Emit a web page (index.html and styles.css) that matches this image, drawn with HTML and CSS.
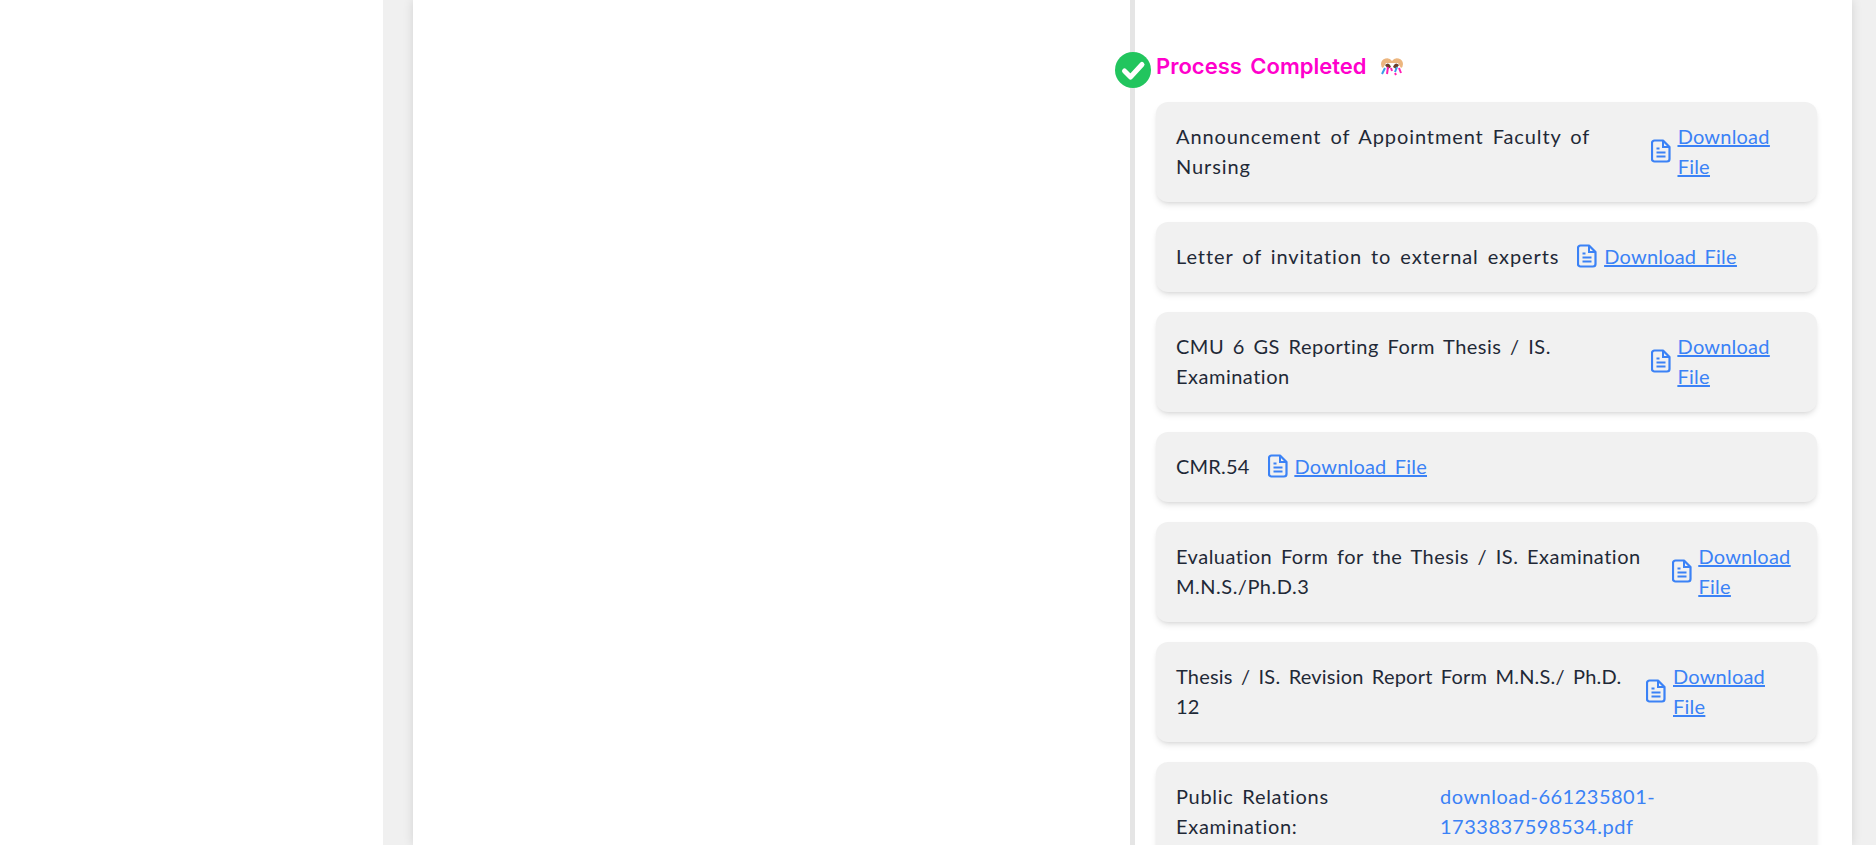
FILE: index.html
```html
<!DOCTYPE html>
<html lang="en">
<head>
<meta charset="utf-8">
<title>Process Completed</title>
<link rel="stylesheet" href="styles.css">
</head>
<body>
<div class="page">
  <aside class="side"></aside>
  <div class="gutter">
    <main class="card">
      <section class="left"></section>
      <section class="right">
        <span class="badge"><svg viewBox="0 0 36 36" width="36" height="36"><circle cx="18" cy="18" r="18" fill="#22c55e"/><path d="M9.500 19l6 6L27 12.500" fill="none" stroke="#fff" stroke-width="5" stroke-linecap="round" stroke-linejoin="round"/></svg></span>
        <h2 class="title"><span>Process Completed</span><svg class="emoji" viewBox="0 0 24 20" width="24" height="20"><path d="M1 8a6 6 0 0 1 11-3 6 6 0 0 1 11 3q0 3-2 4l-3-5h-12l-3 5q-2-1-2-4z" fill="#ecb67f"/><path d="M5 9q3-3 5 0l1 2-3 2zM19 9q-3-3-5 0l-1 2 3 2z" fill="#6b3f2a"/><path d="M5 12l-3 6M17 11l-2 5" stroke="#3b9be8" stroke-width="2"/><path d="M8 11l-1 7M11 12l1 3M19 12l2 5M15 17l1 2" stroke="#ff1fb4" stroke-width="2"/></svg></h2>

        <div class="row">
          <span class="label wide">Announcement of Appointment Faculty of Nursing</span>
          <a class="dl" href="#"><svg class="doc" viewBox="0 0 20 24"><use href="#doc"/></svg><span>Download File</span></a>
        </div>
        <div class="row">
          <span class="label wide">Letter of invitation to external experts</span>
          <a class="dl" href="#"><svg class="doc" viewBox="0 0 20 24"><use href="#doc"/></svg><span>Download File</span></a>
        </div>
        <div class="row">
          <span class="label">CMU 6 GS Reporting Form Thesis / IS. Examination</span>
          <a class="dl" href="#"><svg class="doc" viewBox="0 0 20 24"><use href="#doc"/></svg><span>Download File</span></a>
        </div>
        <div class="row">
          <span class="label tight">CMR.54</span>
          <a class="dl" href="#"><svg class="doc" viewBox="0 0 20 24"><use href="#doc"/></svg><span>Download File</span></a>
        </div>
        <div class="row">
          <span class="label">Evaluation Form for the Thesis / IS. Examination M.N.S./Ph.D.3</span>
          <a class="dl" href="#"><svg class="doc" viewBox="0 0 20 24"><use href="#doc"/></svg><span>Download File</span></a>
        </div>
        <div class="row">
          <span class="label tight">Thesis / IS. Revision Report Form M.N.S./ Ph.D. 12</span>
          <a class="dl" href="#"><svg class="doc" viewBox="0 0 20 24"><use href="#doc"/></svg><span>Download File</span></a>
        </div>
        <div class="row pr">
          <span class="pr-label">Public Relations Examination:</span>
          <a class="pr-link" href="#">download-661235801-1733837598534.pdf</a>
        </div>
      </section>
    </main>
  </div>
</div>
<svg class="defs" width="0" height="0"><symbol id="doc" viewBox="0 0 20 24"><path d="M3.500 1.500h8.500l6.500 6.500v12a2.500 2.500 0 0 1-2.500 2.500H3.500A2.500 2.500 0 0 1 1 20V4a2.500 2.500 0 0 1 2.500-2.500z" fill="none" stroke="currentColor" stroke-width="2.200" stroke-linejoin="round"/><path d="M12 1.500V8h6.500M5.500 9.500h3M5.500 13.500h9M5.500 17.500h9" fill="none" stroke="currentColor" stroke-width="2"/></symbol></svg>
</body>
</html>
```
FILE: styles.css
```css
html, body { margin: 0; height: 100%; overflow: hidden; background: #fff; }
body { font-family: "Lato", "Noto Sans", sans-serif; color: #1f2937; }
.page { display: flex; height: 845px; }
.side { width: 383px; flex: none; background: #fff; }
.gutter { flex: 1; background: #f0f0f0; padding: 0 24px 0 30px; display: flex; }
.card { flex: 1; background: #fff; display: flex; box-shadow: 0 0 10px rgba(0,0,0,.12); height: 845px; overflow: hidden; }
.left { width: 717px; flex: none; border-right: 5px solid #e5e5e5; }
.right { position: relative; flex: 1; padding: 50px 35px 0 21px; }
.badge { position: absolute; left: -20px; top: 52px; width: 36px; height: 36px; }
.badge svg { display: block; }
.title { margin: 0 0 20px; font-family: "Inter", sans-serif; font-size: 22px; line-height: 32px; font-weight: 600; color: #ff00cc; word-spacing: 3px; display: flex; align-items: center; gap: 13px; }
.emoji { flex: none; }
.row { display: flex; align-items: center; gap: 18px; background: #f1f1f1; border-radius: 12px; padding: 19px 20px 21px; margin-bottom: 20px; box-shadow: 0 4px 6px -1px rgba(0,0,0,.1), 0 2px 4px -2px rgba(0,0,0,.1); font-size: 20px; line-height: 30px; word-spacing: 3px; }
.label { flex: 0 1 auto; letter-spacing: .5px; }
.label.wide { letter-spacing: .9px; }
.label.tight { letter-spacing: .2px; }
.dl { display: flex; align-items: center; gap: 7px; color: #3b82f6; letter-spacing: .2px; }
.dl span { text-decoration: underline; }
.doc { width: 20px; height: 24px; flex: none; }
.pr { gap: 0; align-items: flex-start; }
.pr-label { width: 264px; flex: none; padding-right: 60px; box-sizing: border-box; letter-spacing: .7px; }
.pr-link { color: #3b82f6; text-decoration: none; width: 240px; letter-spacing: .5px; }
.defs { position: absolute; }
```
